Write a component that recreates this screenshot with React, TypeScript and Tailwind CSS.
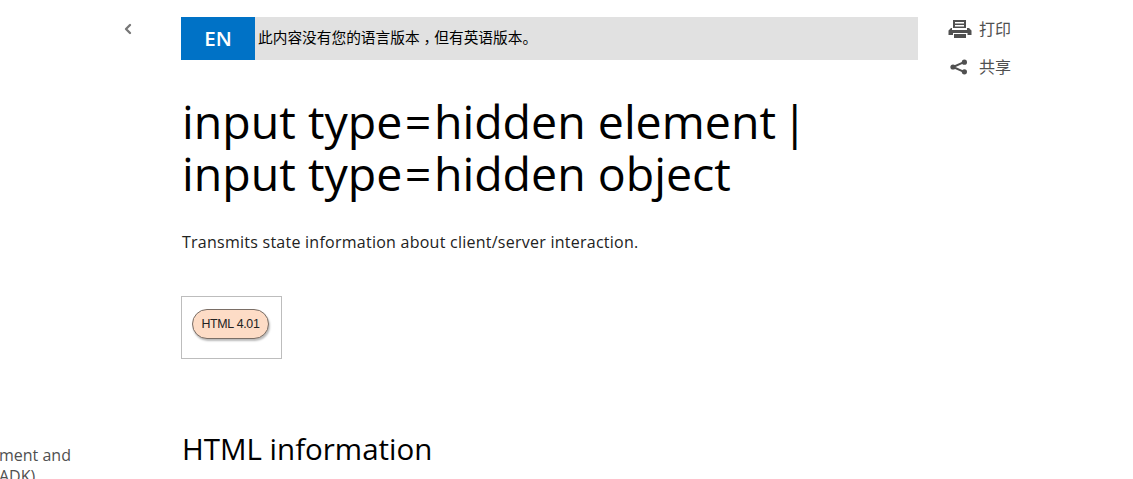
import { ChevronLeft } from "lucide-react";

const cjk = "font-['Open_Sans','Noto_Sans_CJK_SC',sans-serif]";

const PrintIcon = () => (
  <svg width="24" height="20" viewBox="0 0 24 20" fill="#505050">
    <path d="M5 1h13v8H5zM7 3v1.500h9V3zM7 6v1.500h9V6z" fillRule="evenodd" />
    <path d="M3 9h1v2h15V9h2l2.500 2.500V16h-4v-2H5v2H0.500v-4.500z" />
    <path d="M6 15h12v4H6z" />
  </svg>
);

const ShareIcon = () => (
  <svg width="20" height="18" viewBox="0 0 20 18" fill="none">
    <path d="M16 4.200 5 9l11 4.800" stroke="#505050" strokeWidth="2" />
    <circle cx="16.400" cy="4.200" r="2.600" fill="#505050" />
    <circle cx="5" cy="9" r="2.600" fill="#505050" />
    <circle cx="16.400" cy="13.800" r="2.600" fill="#505050" />
  </svg>
);

const Eq = () => <span className="mx-[2.500px]">=</span>;

const App = () => {
  return (
    <div className={`flex h-[479px] w-[1133px] overflow-hidden bg-white ${cjk}`}>
      <aside className="flex w-[181px] shrink-0 flex-col overflow-hidden">
        <div className="flex justify-end pt-[21px] pr-[45px]">
          <ChevronLeft size={16} strokeWidth={3.500} className="text-[#777]" />
        </div>
        <div className="mt-[407.500px] -ml-[1px] text-[16px] leading-[21px] whitespace-nowrap text-[#505050]">
          <p>ment and</p>
          <p>ADK)</p>
        </div>
      </aside>

      <main className="w-[737px] shrink-0 pt-[17px]">
        <div className="flex h-[43px] items-center bg-[#e1e1e1]">
          <span className="flex h-full w-[74px] items-center justify-center bg-[#0072c6] text-[20.500px] font-semibold text-white">
            EN
          </span>
          <span className="ml-[3px] -mt-[2px] text-[14.700px] text-black">
            此内容没有您的语言版本<span className="relative left-[4px]">，</span>但有英语版本。
          </span>
        </div>

        <h1 className="mt-[35px] pl-[1px] text-[46.500px] leading-[52px] text-black">
          input type
          <Eq />
          hidden element <span className="-ml-[6px]">|</span>
          <br />
          input type
          <Eq />
          hidden object
        </h1>

        <p className="mt-[32px] pl-[1px] text-[16px] leading-[22px] tracking-[0.25px] text-[#222]">
          Transmits state information about client/server interaction.
        </p>

        <div className="mt-[43px] flex h-[63px] w-[101px] items-center justify-center border border-[#bdbdbd]">
          <span className="-mt-[7px] -ml-[2px] flex h-[30px] w-[77px] items-center justify-center rounded-full border-[1.500px] border-[#7a6e66] bg-[#fddcc6] font-['Liberation_Sans',sans-serif] text-[12.400px] tracking-[-0.300px] text-[#222] shadow-[1px_2px_2px_#bbb]">
            HTML 4.01
          </span>
        </div>

        <h2 className="mt-[70px] pl-[1px] text-[29.500px] leading-[40px] text-black">HTML information</h2>
      </main>

      <div className="flex flex-col gap-[16px] pt-[18px] pl-[30px] text-[16px] text-[#505050]">
        <div className="flex h-[22px] items-center gap-[7px]">
          <PrintIcon />
          <span>打印</span>
        </div>
        <div className="flex h-[22px] items-center gap-[11px]">
          <ShareIcon />
          <span>共享</span>
        </div>
      </div>
    </div>
  );
};

export default App;
